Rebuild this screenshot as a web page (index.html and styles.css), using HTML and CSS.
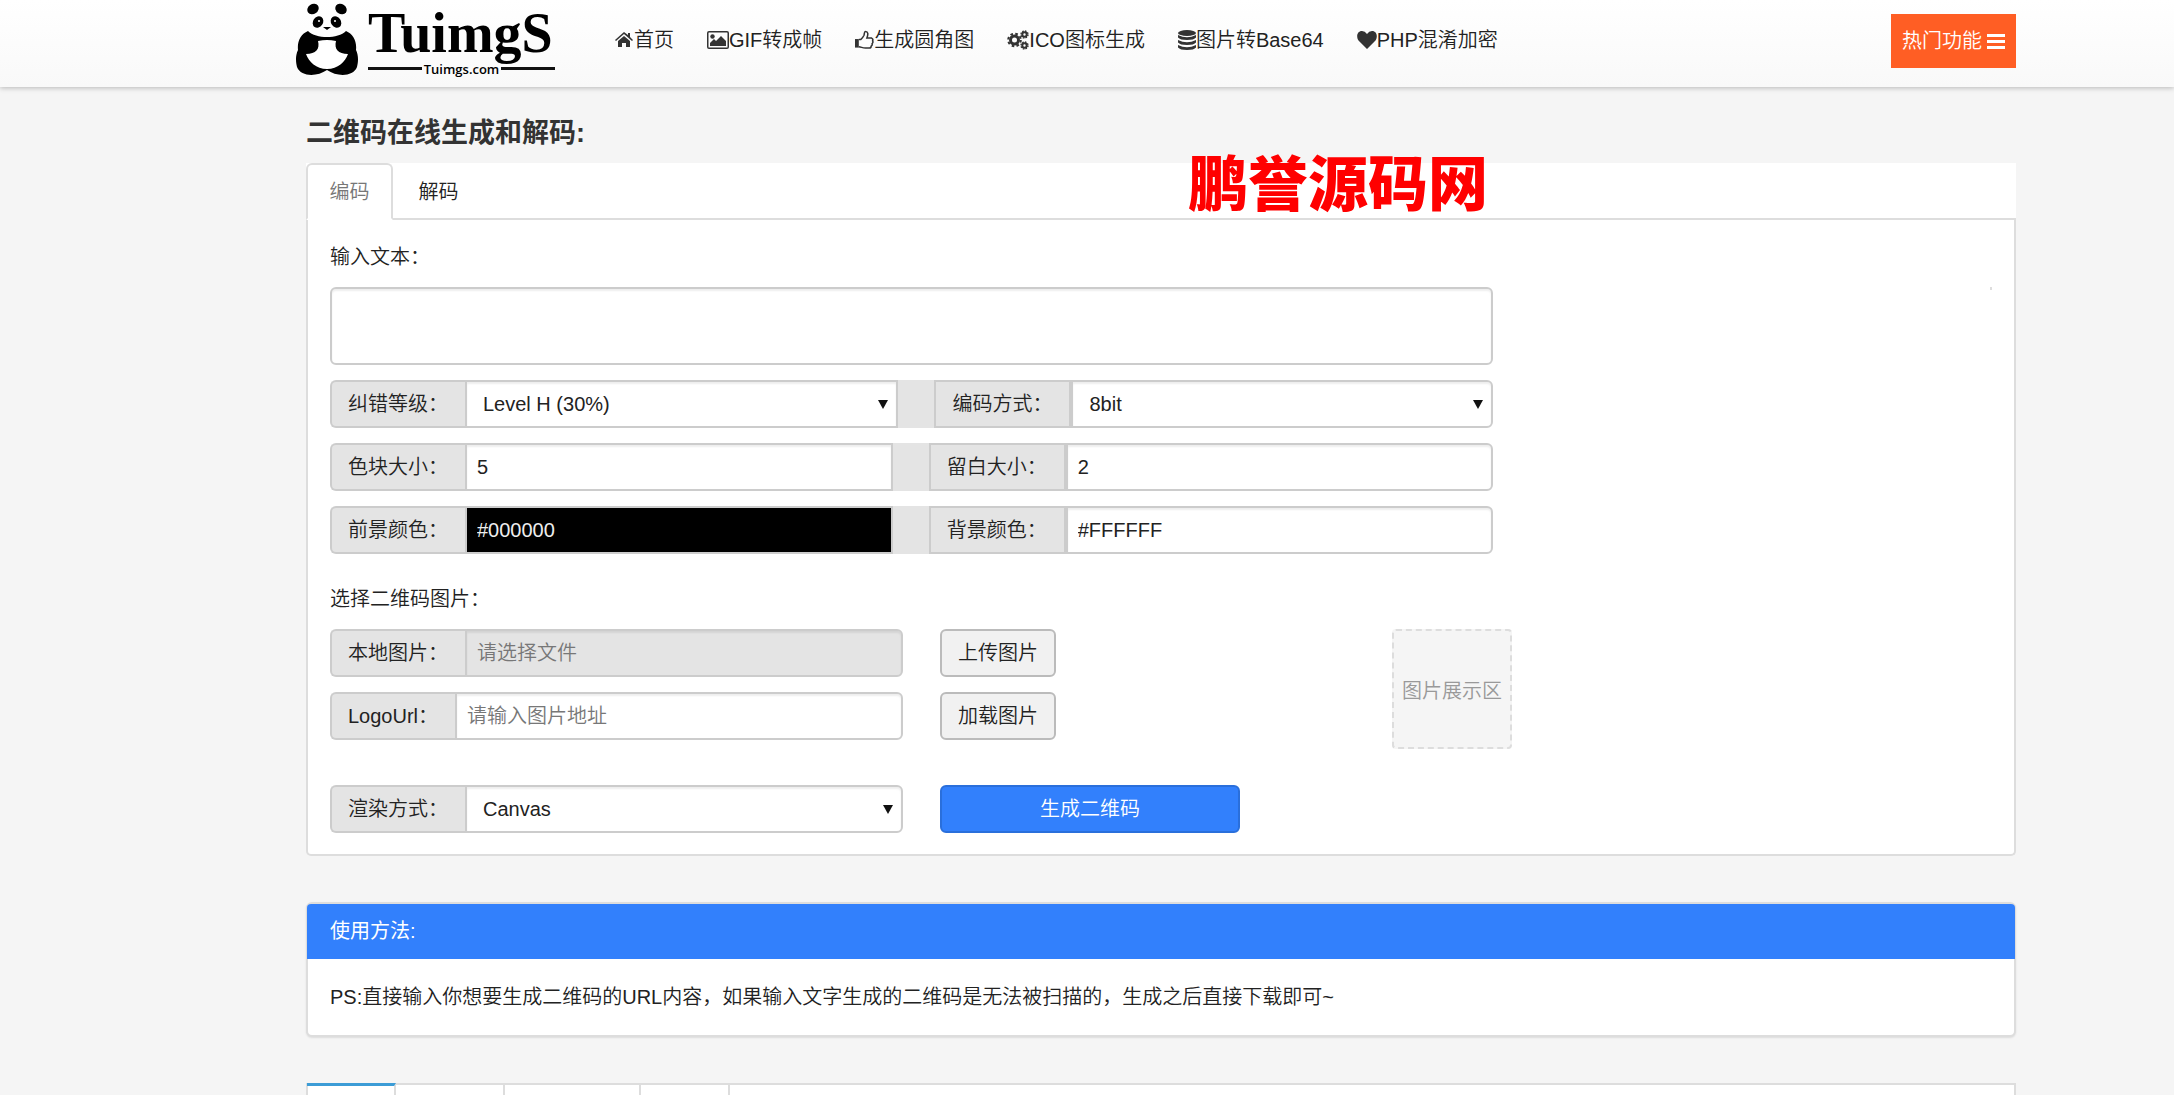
FILE: index.html
```html
<!DOCTYPE html>
<html lang="zh-CN">
<head>
<meta charset="utf-8">
<title>二维码在线生成和解码</title>
<link rel="stylesheet" href="styles.css">
</head>
<body>
<header class="topbar">
  <a class="logo" href="#">
    <svg class="panda" viewBox="0 0 62 74" aria-hidden="true">
      <ellipse cx="17" cy="6" rx="6" ry="5" transform="rotate(-35 17 6)"/>
      <ellipse cx="45" cy="6" rx="6" ry="5" transform="rotate(35 45 6)"/>
      <path d="M12 28C5 31 1 38 2 47C-1 53 0 60 1 64C5 74 21 74 31 67C41 74 57 74 61 64C62 60 63 53 60 47C61 38 57 31 50 28C42 36 20 36 12 28Z"/>
      <path fill="#fff" d="M22 38Q31 36 40 38C38 46 42 51 52 51C49 59 42 66 31 66C20 66 13 59 10 51C20 51 24 46 22 38Z"/>
      <ellipse cx="22" cy="19" rx="5" ry="6" transform="rotate(35 22 19)"/>
      <ellipse cx="40" cy="19" rx="5" ry="6" transform="rotate(-35 40 19)"/>
      <circle cx="23" cy="18" r="1" fill="#fff"/>
      <circle cx="39" cy="18" r="1" fill="#fff"/>
      <path d="M27 24h8l-4 3z"/>
    </svg>
    <span class="wordmark">
      <span class="brand">TuimgS</span>
      <span class="domain">Tuimgs.com</span>
    </span>
  </a>
  <nav class="nav">
    <a href="#"><svg viewBox="0 0 18 16" width="20" height="16"><path d="M9 4L3 9v6h4v-4h4v4h4V9z"/><path d="M9 0L0 8l1 1 8-7 8 7 1-1-3-3V1h-2v2z"/></svg>首页</a>
    <a href="#"><svg viewBox="0 0 22 18" width="22" height="18"><path fill-rule="evenodd" d="M2 0h18q2 0 2 2v14q0 2-2 2H2q-2 0-2-2V2q0-2 2-2zm0 1.500q-.5 0-.5.5v14q0 .5.5.5h18q.5 0 .5-.5V2q0-.5-.5-.5z"/><circle cx="5.500" cy="5.500" r="2.200"/><path d="M3 15v-3l4-4 2 2 5-5 5 5v5z"/></svg>GIF转成帧</a>
    <a href="#"><svg viewBox="0 0 20 20" width="19" height="20"><path d="M0 9h4v9H0z"/><path fill="none" stroke="#333" stroke-width="1.600" d="M4 9.500h2C8 8 9 6 9.500 5C10 3.500 9.500 1 11 1C14 1 14 4 12.500 8H17.500Q19.500 9 18.500 11Q19.500 12.500 18 14Q18.500 15.500 17 16.500Q17 18.500 15 18.500H11C8 18.500 7 17.500 4 17"/></svg>生成圆角图</a>
    <a href="#"><svg viewBox="0 0 22 20" width="22" height="20"><circle cx="7.500" cy="10" r="4" fill="none" stroke="#333" stroke-width="3"/><circle cx="7.500" cy="10" r="6.300" fill="none" stroke="#333" stroke-width="2" stroke-dasharray="2.600 2.350"/><circle cx="17.500" cy="4.500" r="2.200" fill="none" stroke="#333" stroke-width="2"/><circle cx="17.500" cy="4.500" r="3.500" fill="none" stroke="#333" stroke-width="1.400" stroke-dasharray="1.600 1.150"/><circle cx="17.500" cy="15.500" r="2.200" fill="none" stroke="#333" stroke-width="2"/><circle cx="17.500" cy="15.500" r="3.500" fill="none" stroke="#333" stroke-width="1.400" stroke-dasharray="1.600 1.150"/></svg>ICO图标生成</a>
    <a href="#"><svg viewBox="0 0 18 20" width="18" height="20"><ellipse cx="9" cy="3" rx="9" ry="3"/><path d="M0 5q9 4.500 18 0v2.500q-2 2.500-9 2.500T0 7.500zM0 10q9 4.500 18 0v2.500q-2 2.500-9 2.500T0 12.500zM0 15q9 4.500 18 0v2.500q-2 2.500-9 2.500T0 17.500z"/></svg>图片转Base64</a>
    <a href="#"><svg viewBox="0 0 20 18" width="20" height="18"><path d="M10 18L1.500 9.500C-1 6 0 0 5 0Q8 0 10 3Q12 0 15 0C20 0 21 6 18.500 9.500z"/></svg>PHP混淆加密</a>
  </nav>
  <button class="hot" type="button">热门功能<svg viewBox="0 0 18 15" width="18" height="15"><path d="M0 0h18v3H0zM0 6h18v3H0zM0 12h18v3H0z"/></svg></button>
</header>

<main class="content">
  <h1 class="title">二维码在线生成和解码:</h1>

  <section class="coder">
    <div class="tabs">
      <button class="tab tab-active" type="button">编码</button>
      <button class="tab" type="button">解码</button>
      <span class="watermark">鹏誉源码网</span>
    </div>
    <form class="form">
      <label class="caption" for="text">输入文本：</label>
      <div class="text-row">
        <textarea class="field text" id="text"></textarea>
        <div class="result"></div>
      </div>
      <div class="group options">
        <label class="addon" for="level">纠错等级：</label>
        <select class="field wide" id="level"><option>Level H (30%)</option></select>
        <span class="spacer"></span>
        <label class="addon addon-mid" for="mode">编码方式：</label>
        <select class="field last" id="mode"><option>8bit</option></select>
      </div>
      <div class="group options">
        <label class="addon" for="size">色块大小：</label>
        <input class="field" id="size" type="text" value="5">
        <span class="spacer"></span>
        <label class="addon addon-mid" for="margin">留白大小：</label>
        <input class="field last" id="margin" type="text" value="2">
      </div>
      <div class="group options">
        <label class="addon" for="fore">前景颜色：</label>
        <input class="field fore" id="fore" type="text" value="#000000">
        <span class="spacer"></span>
        <label class="addon addon-mid" for="back">背景颜色：</label>
        <input class="field last" id="back" type="text" value="#FFFFFF">
      </div>

      <label class="caption caption-image" for="file">选择二维码图片：</label>
      <div class="images">
        <div class="group">
          <label class="addon" for="file">本地图片：</label>
          <input class="field last" id="file" type="text" placeholder="请选择文件" disabled>
        </div>
        <button class="btn" type="button">上传图片</button>
        <div class="preview">图片展示区</div>
        <div class="group">
          <label class="addon" for="url">LogoUrl：</label>
          <input class="field last" id="url" type="text" placeholder="请输入图片地址">
        </div>
        <button class="btn" type="button">加载图片</button>
        <div class="group render">
          <label class="addon" for="render">渲染方式：</label>
          <select class="field last" id="render"><option>Canvas</option></select>
        </div>
        <button class="btn btn-primary render" type="button">生成二维码</button>
      </div>
    </form>
  </section>

  <section class="usage">
    <h2 class="usage-title">使用方法:</h2>
    <p class="usage-text">PS:直接输入你想要生成二维码的URL内容，如果输入文字生成的二维码是无法被扫描的，生成之后直接下载即可~</p>
  </section>

  <section class="more">
    <div class="more-tab more-active"></div>
    <div class="more-tab more-medium"></div>
    <div class="more-tab more-large"></div>
    <div class="more-tab"></div>
  </section>
</main>
</body>
</html>
```

FILE: styles.css
```css
* {
  box-sizing: border-box;
}

body {
  margin: 0;
  min-height: 100vh;
  display: flex;
  flex-direction: column;
  background: #f5f5f5;
  color: #222;
  font: 350 20px/28px "Liberation Sans", "Noto Sans CJK SC", sans-serif;
}

button,
input,
select,
textarea {
  font: inherit;
  color: inherit;
}

a {
  color: inherit;
  text-decoration: none;
}

/* Top bar */

.topbar {
  display: flex;
  align-items: center;
  height: 87px;
  padding: 0 158px 0 296px;
  background: linear-gradient(#fff, #f9f9f9);
  box-shadow: 0 1px 5px rgba(0, 0, 0, .25);
}

.logo {
  display: flex;
  align-items: center;
  gap: 10px;
  width: 318px;
  padding-bottom: 8px;
  color: #000;
}

.panda {
  width: 62px;
  height: 74px;
}

.wordmark {
  display: flex;
  flex-direction: column;
  width: 187px;
}

.brand {
  font: 700 56px/58px "Liberation Serif", serif;
}

.domain {
  display: flex;
  align-items: center;
  justify-content: space-between;
  font: 600 13px/14px "Open Sans", sans-serif;
}

.domain::before,
.domain::after {
  content: "";
  width: 54px;
  height: 3px;
  background: #111;
}

.nav {
  display: flex;
  gap: 33px;
  padding-bottom: 7px;
}

.nav a {
  display: flex;
  align-items: center;
  white-space: nowrap;
}

.nav svg {
  fill: #333;
}

.hot {
  display: flex;
  align-items: center;
  justify-content: center;
  gap: 5px;
  width: 125px;
  height: 54px;
  margin: 0 0 5px auto;
  padding: 0;
  border: 0;
  background: #ff5e24;
  color: #fff;
}

.hot svg {
  fill: #fff;
}

/* Page body */

.content {
  flex: 1;
  display: flex;
  flex-direction: column;
  padding: 0 158px 0 306px;
}

.title {
  margin: 26px 0 10px;
  color: #333;
  font-size: 27px;
  font-weight: 700;
  line-height: 40px;
}

.tabs {
  position: relative;
  display: flex;
  height: 57px;
  background: #fff;
  box-shadow: inset 0 -2px #ddd;
}

.tab {
  width: 91px;
  padding: 0;
  border: 2px solid transparent;
  background: none;
}

.tab-active {
  width: 87px;
  border-color: #ddd #ddd #fff;
  border-radius: 6px 6px 0 0;
  background: #fff;
  color: #777;
}

.watermark {
  position: absolute;
  left: 882px;
  top: -13px;
  color: #f00;
  font-size: 60px;
  font-weight: 900;
  line-height: 72px;
}

.form {
  padding: 23px 22px 21px;
  border: 2px solid #ddd;
  border-top: 0;
  border-radius: 0 0 5px 5px;
  background: #fff;
}

.caption {
  display: block;
  margin-bottom: 16px;
}

.caption-image {
  margin-top: 31px;
}

.text-row {
  display: flex;
  justify-content: space-between;
}

.result {
  width: 2px;
  height: 3px;
  background: #ddd;
}

.field {
  flex: 1;
  min-width: 0;
  height: 48px;
  margin: 0;
  padding: 0 10px;
  border: 2px solid #ccc;
  border-radius: 0;
  background: #fff;
  box-shadow: inset 0 2px 2px rgba(0, 0, 0, .07);
}

.field::placeholder {
  color: #777;
  opacity: 1;
}

.text {
  flex: none;
  width: 70%;
  height: 78px;
  border-radius: 6px;
  resize: none;
}

.last {
  border-radius: 0 6px 6px 0;
}

select.field {
  padding: 0 16px;
  appearance: none;
  background: #fff url("data:image/svg+xml,%3Csvg xmlns='http://www.w3.org/2000/svg' width='10' height='9'%3E%3Cpath d='M0 0h10L5 9z' fill='%23111'/%3E%3C/svg%3E") no-repeat right 8px center;
}

.wide {
  flex-grow: 1.03;
}

.field:disabled {
  background: #e4e4e4;
}

.fore {
  background: #000;
  color: #eee;
}

.group {
  display: flex;
}

.options {
  width: 70%;
  margin-top: 15px;
}

.addon {
  padding: 8px 17px 8px 16px;
  border: 2px solid #ccc;
  border-right: 0;
  border-radius: 6px 0 0 6px;
  background: #e4e4e4;
  white-space: nowrap;
}

.addon-mid {
  border-right: 2px solid #ccc;
  border-radius: 0;
}

.spacer {
  width: 36px;
  background: #e4e4e4;
}

.images {
  display: grid;
  grid-template-columns: 573fr 415fr 600fr;
  gap: 15px 37px;
}

.render {
  margin-top: 30px;
}

.btn {
  justify-self: start;
  height: 48px;
  padding: 0 16px;
  border: 2px solid #bbb;
  border-radius: 6px;
  background: #f1f1f1;
}

.btn-primary {
  width: 300px;
  border-color: #2a6fdb;
  background: #3280fc;
  color: #fff;
}

.preview {
  grid-column: 3;
  grid-row: 1 / span 3;
  width: 120px;
  height: 120px;
  border: 2px dashed #ddd;
  border-radius: 4px;
  background: #f5f5f5;
  color: #999;
  line-height: 120px;
  text-align: center;
}

/* Usage notes */

.usage {
  margin-top: 46px;
  border: 2px solid #ddd;
  border-radius: 6px;
  background: #fff;
  box-shadow: 0 1px 2px rgba(0, 0, 0, .1);
}

.usage-title {
  margin: 0 -1px;
  padding: 13px 23px 14px;
  border-radius: 4px 4px 0 0;
  background: #3280fc;
  color: #fff;
  font-size: 20px;
  font-weight: 400;
}

.usage-text {
  margin: 0;
  padding: 24px 22px;
}

/* Tab strip at the foot of the page */

.more {
  flex: 1;
  display: flex;
  min-height: 13px;
  margin-top: 46px;
  border: solid #ddd;
  border-width: 2px 2px 0;
  background: #fff;
}

.more-tab {
  width: 89px;
  border-right: 2px solid #ddd;
}

.more-active {
  margin: -2px 0 0 -1px;
  border-top: 3px solid #3c9cd6;
}

.more-medium {
  width: 109px;
}

.more-large {
  width: 136px;
}
```
